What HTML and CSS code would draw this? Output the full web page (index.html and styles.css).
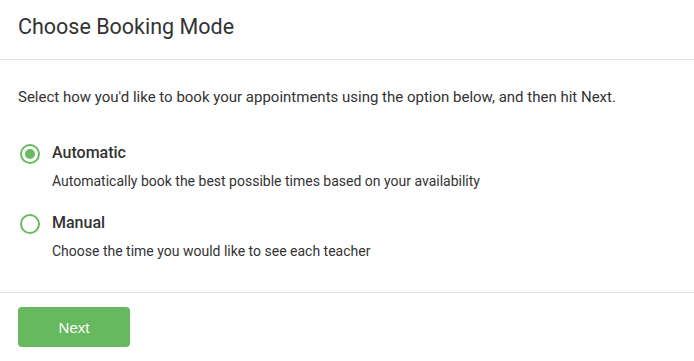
FILE: index.html
```html
<!DOCTYPE html>
<html lang="en">
<head>
  <meta charset="UTF-8" />
  <title>Choose Booking Mode</title>
  <link rel="stylesheet" href="styles.css">
</head>
<body>
  <div class="modal">
    <div class="modal-header">
      <h1>Choose Booking Mode</h1>
    </div>

    <div class="modal-body">
      <p class="intro">Select how you'd like to book your appointments using the option below, and then hit Next.</p>

      <label class="option">
        <input type="radio" name="mode" checked />
        <span class="radio"></span>
        <span class="option-text">
          <span class="option-title">Automatic</span>
          <span class="option-desc">Automatically book the best possible times based on your availability</span>
        </span>
      </label>

      <label class="option">
        <input type="radio" name="mode" />
        <span class="radio"></span>
        <span class="option-text">
          <span class="option-title">Manual</span>
          <span class="option-desc">Choose the time you would like to see each teacher</span>
        </span>
      </label>
    </div>

    <div class="modal-footer">
      <button class="next">Next</button>
    </div>
  </div>
</body>
</html>
```

FILE: styles.css
```css
* {
  box-sizing: border-box;
  margin: 0;
  padding: 0;
}

body {
  font-family: Roboto, "Liberation Sans", sans-serif;
  color: #333;
  background: #fff;
}

.modal {
  width: 694px;
}

.modal-header {
  height: 60px;
  padding: 13px 18px 0;
  border-bottom: 1px solid #e5e5e5;
}

.modal-header h1 {
  font-size: 21.5px;
  font-weight: 400;
  line-height: 28px;
}

.modal-body {
  padding: 27px 18px 20px;
  height: 233px;
  border-bottom: 1px solid #e0e0e0;
}

.intro {
  font-size: 15px;
  line-height: 20px;
  margin-bottom: 36px;
}

.option {
  display: flex;
  gap: 12px;
  margin-bottom: 22px;
  cursor: pointer;
}

.option input {
  display: none;
}

.radio {
  width: 20px;
  height: 20px;
  margin-left: 2px;
  margin-top: 1px;
  border: 2px solid #66bb5f;
  border-radius: 50%;
  flex-shrink: 0;
  position: relative;
}

.option input:checked + .radio::after {
  content: "";
  position: absolute;
  left: 3px;
  top: 3px;
  width: 10px;
  height: 10px;
  border-radius: 50%;
  background: #66bb5f;
}

.option-text {
  display: flex;
  flex-direction: column;
}

.option-title {
  font-size: 16px;
  font-weight: 500;
  line-height: 20px;
  margin-bottom: 8px;
}

.option-desc {
  font-size: 14px;
  line-height: 20px;
}

.modal-footer {
  padding: 14px 18px;
}

.next {
  width: 112px;
  height: 40px;
  background: #66b95e;
  color: #fff;
  border: none;
  border-radius: 4px;
  font-family: "Liberation Sans", Arial, sans-serif;
  font-size: 15px;
  cursor: pointer;
}
```
